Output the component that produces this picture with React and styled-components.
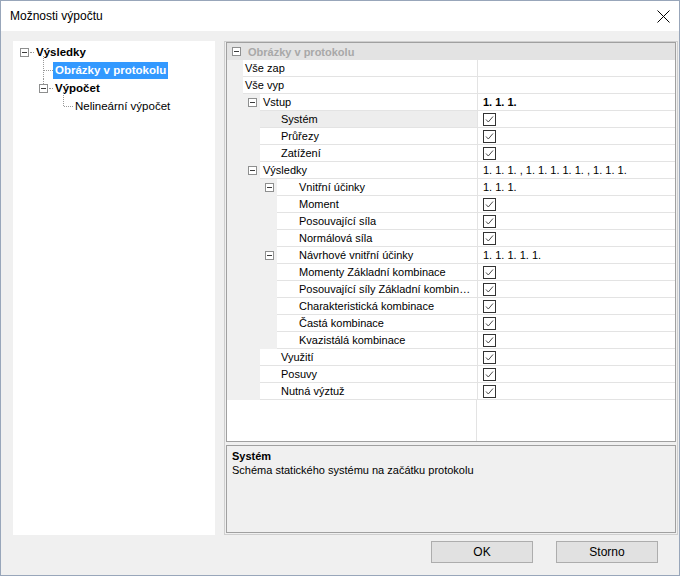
import React from 'react'
import styled, { createGlobalStyle } from 'styled-components'

const Global = createGlobalStyle`
  html, body {
    margin: 0;
    padding: 0;
    background: #ffffff;
  }
  body {
    font-family: "Liberation Sans", Arial, sans-serif;
    color: #000;
  }
`

const Window = styled.div`
  width: 680px;
  height: 576px;
  box-sizing: border-box;
  border: 1px solid #98a6ba;
  display: flex;
  flex-direction: column;
  background: #f0f0f0;
`

const TitleBar = styled.div`
  height: 30px;
  flex: none;
  background: #ffffff;
  display: flex;
  align-items: center;
  justify-content: space-between;
  padding: 0 9px 0 9px;
  font-size: 12px;
`

const Body = styled.div`
  flex: 1;
  display: flex;
  flex-direction: column;
  padding: 10px 1px 12px 12px;
`

const Main = styled.div`
  height: 494px;
  display: flex;
  gap: 9px;
`

const TreePanel = styled.div`
  width: 202px;
  flex: none;
  background: #ffffff;
  padding-top: 2px;
  font-size: 11.5px;
`

const TreeRow = styled.div`
  height: 18px;
  display: flex;
  align-items: center;
  padding-left: ${p => p.$indent}px;
`

const Expander = styled.span`
  position: relative;
  width: 9px;
  height: 9px;
  flex: none;
  box-sizing: border-box;
  border: 1px solid #8e8f8f;
  background: #fff;
  display: flex;
  align-items: center;
  justify-content: center;
  &::after {
    content: '';
    width: 5px;
    height: 1px;
    background: #3c3c3c;
  }
  &::before {
    content: '';
    display: ${p => (p.$above ? 'block' : 'none')};
    position: absolute;
    left: 3px;
    bottom: 8px;
    height: 6px;
    border-left: 1px dotted #9a9a9a;
  }
`

const Dash = styled.span`
  width: 4px;
  flex: none;
  margin-left: 1px;
  border-top: 1px dotted #9a9a9a;
`

const Twig = styled.span`
  position: relative;
  width: 10px;
  height: 18px;
  flex: none;
  &::before {
    content: '';
    position: absolute;
    left: 0;
    top: ${p => (p.$first ? '-5px' : '0')};
    bottom: ${p => (p.$last ? '9px' : '0')};
    border-left: 1px dotted #9a9a9a;
  }
  &::after {
    content: '';
    position: absolute;
    left: 1px;
    top: 9px;
    width: 9px;
    border-top: 1px dotted #9a9a9a;
  }
`

const TreeLabel = styled.span`
  padding: 1px 2px 2px;
  font-weight: ${p => (p.$bold ? 700 : 400)};
  background: ${p => (p.$selected ? '#3399ff' : 'transparent')};
  color: ${p => (p.$selected ? '#ffffff' : '#000000')};
  line-height: 14px;
  white-space: nowrap;
`

const GridFrame = styled.div`
  flex: 1;
  min-width: 0;
  box-sizing: border-box;
  border: 1px solid #cfcfcf;
  padding: 0 1px 1px;
  display: flex;
  flex-direction: column;
  gap: 3px;
  font-size: 11px;
`

const List = styled.div`
  flex: 1;
  min-width: 0;
  border: 1px solid #a0a0a0;
  background: #ffffff;
  display: flex;
  flex-direction: column;
`

const CategoryBand = styled.div`
  height: 17px;
  flex: none;
  background: #e3e3e3;
  display: flex;
  align-items: center;
  padding-left: 5px;
  color: #a8a8a8;
  font-weight: 700;
  gap: 7px;
`

const Row = styled.div`
  height: 17px;
  flex: none;
  display: flex;
  min-width: 0;
  overflow: hidden;
`

const Gutter = styled.div`
  width: ${p => p.$width}px;
  flex: none;
  box-sizing: border-box;
  background: #f0f0f0;
  display: flex;
  align-items: center;
  padding-left: ${p => p.$indent}px;
`

const NameCell = styled.div`
  flex: 1;
  min-width: 0;
  box-sizing: border-box;
  border-bottom: 1px solid #e3e3e3;
  background: ${p => (p.$selected ? '#ededed' : '#ffffff')};
  padding-left: ${p => p.$pad}px;
  padding-right: 4px;
  line-height: 16px;
  white-space: nowrap;
  overflow: hidden;
  text-overflow: ellipsis;
`

const ValueCell = styled.div`
  width: 198px;
  flex: none;
  box-sizing: border-box;
  border-left: 1px solid #e3e3e3;
  border-bottom: 1px solid #e3e3e3;
  padding-left: 5px;
  line-height: 16px;
  font-weight: ${p => (p.$bold ? 700 : 400)};
  display: flex;
  align-items: center;
  white-space: nowrap;
  overflow: hidden;
`

const Filler = styled.div`
  flex: 1;
  display: flex;
`

const FillerName = styled.div`
  width: 250px;
  box-sizing: border-box;
  border-right: 1px solid #e3e3e3;
`

const Check = styled.span`
  width: 13px;
  height: 13px;
  box-sizing: border-box;
  border: 1px solid #333333;
  background: #fff;
  display: flex;
  align-items: center;
  justify-content: center;
`

const Description = styled.div`
  height: 88px;
  flex: none;
  box-sizing: border-box;
  border: 1px solid #a0a0a0;
  background: #f0f0f0;
  padding: 3px 5px;
  line-height: 14px;
`

const DescTitle = styled.div`
  font-weight: 700;
`

const ButtonBar = styled.div`
  margin-top: 6px;
  display: flex;
  justify-content: flex-end;
  gap: 23px;
  padding-right: 20px;
`

const Button = styled.button`
  width: 102px;
  height: 22px;
  box-sizing: border-box;
  border: 1px solid #adadad;
  background: #e1e1e1;
  font-family: "Liberation Sans", Arial, sans-serif;
  font-size: 12px;
  color: #000;
  padding: 0;
`

const CheckBox = () => (
  <Check>
    <svg width="11" height="11" viewBox="0 0 11 11">
      <path d="M2 5.5 L4.3 8 L9 2.5" fill="none" stroke="#4a4a4a" strokeWidth="1" />
    </svg>
  </Check>
)

const rows = [
  { name: 'Vše zap', gutter: 16, pad: 2 },
  { name: 'Vše vyp', gutter: 16, pad: 2 },
  { name: 'Vstup', gutter: 33, pad: 3, expander: 21, value: '1. 1. 1.', bold: true },
  { name: 'Systém', gutter: 33, pad: 21, check: true, selected: true },
  { name: 'Průřezy', gutter: 33, pad: 21, check: true },
  { name: 'Zatížení', gutter: 33, pad: 21, check: true },
  { name: 'Výsledky', gutter: 33, pad: 3, expander: 21, value: '1. 1. 1. , 1. 1. 1. 1. 1. , 1. 1. 1.' },
  { name: 'Vnitřní účinky', gutter: 50, pad: 22, expander: 38, value: '1. 1. 1.' },
  { name: 'Moment', gutter: 50, pad: 22, check: true },
  { name: 'Posouvající síla', gutter: 50, pad: 22, check: true },
  { name: 'Normálová síla', gutter: 50, pad: 22, check: true },
  { name: 'Návrhové vnitřní účinky', gutter: 50, pad: 22, expander: 38, value: '1. 1. 1. 1. 1.' },
  { name: 'Momenty Základní kombinace', gutter: 50, pad: 22, check: true },
  { name: 'Posouvající síly Základní kombinace', gutter: 50, pad: 22, check: true },
  { name: 'Charakteristická kombinace', gutter: 50, pad: 22, check: true },
  { name: 'Častá kombinace', gutter: 50, pad: 22, check: true },
  { name: 'Kvazistálá kombinace', gutter: 50, pad: 22, check: true },
  { name: 'Využití', gutter: 33, pad: 21, check: true },
  { name: 'Posuvy', gutter: 33, pad: 21, check: true },
  { name: 'Nutná výztuž', gutter: 33, pad: 21, check: true },
]

const App = () => {
  return (
    <Window>
      <Global />
      <TitleBar>
        <span>Možnosti výpočtu</span>
        <svg width="13" height="13" viewBox="0 0 13 13">
          <path d="M0.5 0.5 L12.5 12.5 M12.5 0.5 L0.5 12.5" stroke="#000" strokeWidth="1" />
        </svg>
      </TitleBar>
      <Body>
        <Main>
          <TreePanel>
            <TreeRow $indent={7}>
              <Expander />
              <Dash />
              <TreeLabel $bold>Výsledky</TreeLabel>
            </TreeRow>
            <TreeRow $indent={30}>
              <Twig $first />
              <TreeLabel $bold $selected>Obrázky v protokolu</TreeLabel>
            </TreeRow>
            <TreeRow $indent={26}>
              <Expander $above />
              <Dash />
              <TreeLabel $bold>Výpočet</TreeLabel>
            </TreeRow>
            <TreeRow $indent={50}>
              <Twig $first $last />
              <TreeLabel>Nelineární výpočet</TreeLabel>
            </TreeRow>
          </TreePanel>

          <GridFrame>
            <List>
              <CategoryBand>
                <Expander />
                <span>Obrázky v protokolu</span>
              </CategoryBand>
              {rows.map(r => (
                <Row key={r.name}>
                  <Gutter $width={r.gutter} $indent={r.expander || 0}>
                    {r.expander ? <Expander /> : null}
                  </Gutter>
                  <NameCell $pad={r.pad} $selected={r.selected}>{r.name}</NameCell>
                  <ValueCell $bold={r.bold}>
                    {r.check ? <CheckBox /> : r.value}
                  </ValueCell>
                </Row>
              ))}
              <Filler>
                <FillerName />
              </Filler>
            </List>
            <Description>
              <DescTitle>Systém</DescTitle>
              <div>Schéma statického systému na začátku protokolu</div>
            </Description>
          </GridFrame>
        </Main>
        <ButtonBar>
          <Button>OK</Button>
          <Button>Storno</Button>
        </ButtonBar>
      </Body>
    </Window>
  )
}

export default App
